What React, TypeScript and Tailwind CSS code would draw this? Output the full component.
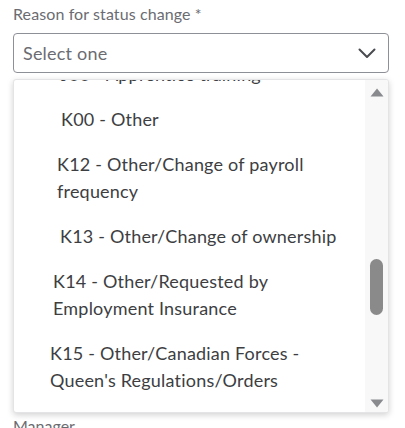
import React from 'react';

const items: { lines: string[]; pad: string }[] = [
  { lines: ['J00 - Apprentice training'], pad: 'pl-[47px]' },
  { lines: ['K00 - Other'], pad: 'pl-[47px]' },
  { lines: ['K12 - Other/Change of payroll', 'frequency'], pad: 'pl-[43px]' },
  { lines: ['K13 - Other/Change of ownership'], pad: 'pl-[46px]' },
  { lines: ['K14 - Other/Requested by', 'Employment Insurance'], pad: 'pl-[39px]' },
  { lines: ['K15 - Other/Canadian Forces -', "Queen's Regulations/Orders"], pad: 'pl-[36px]' },
];

const App: React.FC = () => {
  return (
    <div className="relative w-[405px] h-[428px] overflow-hidden bg-white px-[13px] pt-[4px] font-['Lato','Liberation_Sans',sans-serif]">
      <label className="block text-[16px] leading-[20px] tracking-[0.1px] text-[#6b6c72]">Reason for status change *</label>

      <div className="mt-[9px] flex h-[40px] w-[376px] items-center justify-between rounded-[4px] border border-[#8d9096] pl-[9px] pr-[12px]">
        <span className="text-[18px] tracking-[0.2px] text-[#6b6c72]">Select one</span>
        <svg width="18" height="11" viewBox="0 0 18 11" fill="none">
          <path d="M1.5 1.5 L9 9 L16.5 1.5" stroke="#4a4b50" strokeWidth="2" strokeLinecap="round" strokeLinejoin="round" />
        </svg>
      </div>

      <div className="mt-[343px] text-[16px] leading-[20px] text-[#6b6c72]">Manager</div>

      <div className="absolute left-[13px] top-[79px] flex h-[334px] w-[376px] overflow-hidden rounded-[3px] border border-[#e4e4e6] bg-white shadow-[0_2px_6px_rgba(0,0,0,0.18)]">
        <div className="flex-1 overflow-hidden">
          <div className="-mt-[28px]">
            {items.map((it) => (
              <div key={it.lines[0]} className={`py-[9px] ${it.pad} text-[18px] leading-[27px] tracking-[0.2px] text-[#3d3e42]`}>
                {it.lines.map((l) => (
                  <div key={l}>{l}</div>
                ))}
              </div>
            ))}
          </div>
        </div>
        <div className="flex w-[23px] flex-col items-center bg-[#f8f8f9] pt-[8px] pb-[4px]">
          <svg width="14" height="9" viewBox="0 0 14 9">
            <path d="M7 0.5 L13.5 8.5 L0.5 8.5 Z" fill="#888a8d" />
          </svg>
          <div className="mt-[162px] h-[56px] w-[13px] rounded-full bg-[#8a8a8a]" />
          <div className="flex-1" />
          <svg width="14" height="9" viewBox="0 0 14 9">
            <path d="M0.5 0.5 L13.5 0.5 L7 8.5 Z" fill="#888a8d" />
          </svg>
        </div>
      </div>
    </div>
  );
};

export default App;
